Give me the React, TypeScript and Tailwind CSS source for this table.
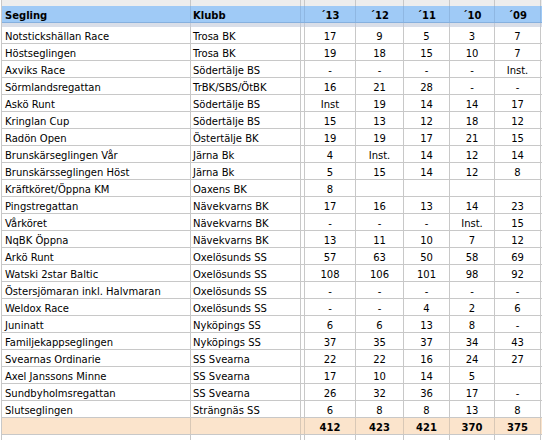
import React from "react";

const rows: string[][] = [
  ["Notstickshällan Race", "Trosa BK", "17", "9", "5", "3", "7"],
  ["Höstseglingen", "Trosa BK", "19", "18", "15", "10", "7"],
  ["Axviks Race", "Södertälje BS", "-", "-", "-", "-", "Inst."],
  ["Sörmlandsregattan", "TrBK/SBS/ÖtBK", "16", "21", "28", "-", "-"],
  ["Askö Runt", "Södertälje BS", "Inst", "19", "14", "14", "17"],
  ["Kringlan Cup", "Södertälje BS", "15", "13", "12", "18", "12"],
  ["Radön Open", "Östertälje BK", "19", "19", "17", "21", "15"],
  ["Brunskärseglingen Vår", "Järna Bk", "4", "Inst.", "14", "12", "14"],
  ["Brunskärsseglingen Höst", "Järna Bk", "5", "15", "14", "12", "8"],
  ["Kräftköret/Öppna KM", "Oaxens BK", "8", "", "", "", ""],
  ["Pingstregattan", "Nävekvarns BK", "17", "16", "13", "14", "23"],
  ["Vårköret", "Nävekvarns BK", "-", "-", "-", "Inst.", "15"],
  ["NqBK Öppna", "Nävekvarns BK", "13", "11", "10", "7", "12"],
  ["Arkö Runt", "Oxelösunds SS", "57", "63", "50", "58", "69"],
  ["Watski 2star Baltic", "Oxelösunds SS", "108", "106", "101", "98", "92"],
  ["Östersjömaran inkl. Halvmaran", "Oxelösunds SS", "-", "-", "-", "-", "-"],
  ["Weldox Race", "Oxelösunds SS", "-", "-", "4", "2", "6"],
  ["Juninatt", "Nyköpings SS", "6", "6", "13", "8", "-"],
  ["Familjekappseglingen", "Nyköpings SS", "37", "35", "37", "34", "43"],
  ["Svearnas Ordinarie", "SS Svearna", "22", "22", "16", "24", "27"],
  ["Axel Janssons Minne", "SS Svearna", "17", "10", "14", "5", ""],
  ["Sundbyholmsregattan", "SS Svearna", "26", "32", "36", "17", "-"],
  ["Slutseglingen", "Strängnäs SS", "6", "8", "8", "13", "8"],
];

const numW = ["w-[51px]", "w-[48px]", "w-[46px]", "w-[45px]", "w-[46px]"];

function Row({
  a,
  b,
  nums,
  h,
  bg,
  line,
  bold,
}: {
  a: string;
  b: string;
  nums: string[];
  h: string;
  bg: string;
  line: string;
  bold?: boolean;
}) {
  const base = `shrink-0 flex items-end border-r ${line} ${h}`;
  return (
    <div className={`flex ${bg} ${bold ? "font-bold" : ""}`}>
      <div className={`${base} w-[189px] pl-[3px] leading-[13px] whitespace-nowrap overflow-hidden`}>{a}</div>
      <div className={`${base} w-[110px] pl-[2px] leading-[13px] whitespace-nowrap overflow-hidden`}>{b}</div>
      <div className={`${base} w-[4px]`}></div>
      {nums.map((n, i) => (
        <div key={i} className={`${base} ${numW[i]} justify-center leading-[13px]`}>
          {n}
        </div>
      ))}
      <div className={`flex-1 ${h}`}></div>
    </div>
  );
}

export default function App() {
  return (
    <div className="w-[542px] h-[440px] overflow-hidden bg-white pl-[1px] font-['DejaVu_Sans',sans-serif] text-[10px] text-black">
      <div className="border-l border-[#c8c8c8]">
        {/* top strip */}
        <Row a="" b="" nums={["", "", "", "", ""]} h="h-[6px]" bg="bg-[#ededed]" line="border-[#c8c8c8]" />
        {/* header */}
        <div className="border-b border-[#86b0de]">
          <Row
            a="Segling"
            b="Klubb"
            nums={["´13", "´12", "´11", "´10", "´09"]}
            h="h-[16px]"
            bg="bg-[#9fcaf6]"
            line="border-[#8fb7e2]"
            bold
          />
        </div>
        {/* gray band */}
        <Row a="" b="" nums={["", "", "", "", ""]} h="h-[4px]" bg="bg-[#d9dee8]" line="border-[#c3c9d4]" />
        {rows.map((r, i) => (
          <div key={i} className="border-b border-[#c8c8c8]">
            <Row a={r[0]} b={r[1]} nums={r.slice(2)} h="h-[16px]" bg="bg-white" line="border-[#c8c8c8]" />
          </div>
        ))}
        <div className="border-b border-[#c8c8c8]">
          <Row
            a=""
            b=""
            nums={["412", "423", "421", "370", "375"]}
            h="h-[16px]"
            bg="bg-[#fbe4cc]"
            line="border-[#d9c8b6]"
            bold
          />
        </div>
        <Row a="" b="" nums={["", "", "", "", ""]} h="h-[16px]" bg="bg-white" line="border-[#c8c8c8]" />
      </div>
    </div>
  );
}
